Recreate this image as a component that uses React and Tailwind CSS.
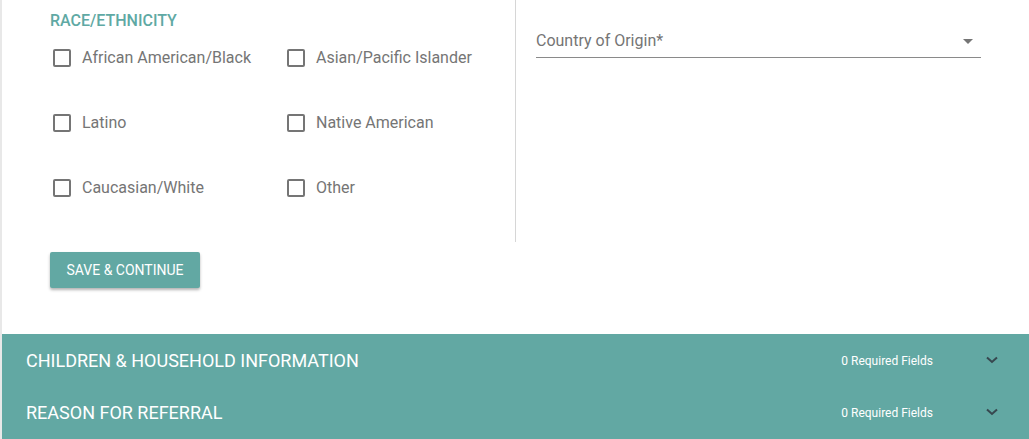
import React from "react";

const font = { fontFamily: "Roboto, 'Noto Sans', sans-serif" };

function Checkbox({ label }) {
  return (
    <label className="flex items-center h-[18px]">
      <span className="w-[18px] h-[18px] border-2 border-[#757575] rounded-[2px] box-border shrink-0" />
      <span className="ml-[11px] text-[16px] text-[#757575] leading-5 whitespace-nowrap">{label}</span>
    </label>
  );
}

function Chevron() {
  return (
    <svg width="12" height="8" viewBox="0 0 12 8" className="shrink-0">
      <path d="M1 1.5 L6 6 L11 1.5" fill="none" stroke="#37474f" strokeWidth="2" />
    </svg>
  );
}

function Section({ title }) {
  return (
    <div className="h-[52px] flex items-center pl-6 pr-[31px]">
      <div className="text-[18px] leading-6 font-normal text-white flex-1 mt-[2px]">{title}</div>
      <div className="text-[12px] text-white mr-[53px] mt-[1px]">0 Required Fields</div>
      <Chevron />
    </div>
  );
}

export default function App() {
  const items = [
    ["African American/Black", "Asian/Pacific Islander"],
    ["Latino", "Native American"],
    ["Caucasian/White", "Other"],
  ];
  return (
    <div className="w-[1029px] h-[439px] bg-[#e8e8e8] pl-[2px] overflow-hidden" style={font}>
      <div className="bg-white h-full flex flex-col">
        <div className="flex h-[334px] flex-col">
          <div className="flex">
            <div className="w-[514px] h-[242px] border-r border-[#d6d6d6] pl-12 pt-[11px]">
              <div className="text-[16px] leading-5 font-medium text-[#5fa9a4]">RACE/ETHNICITY</div>
              <div className="mt-[18px] flex flex-col gap-[47px] pl-[3px]">
                {items.map((row, i) => (
                  <div key={i} className="flex">
                    <div className="w-[234px]"><Checkbox label={row[0]} /></div>
                    <Checkbox label={row[1]} />
                  </div>
                ))}
              </div>
            </div>
            <div className="pl-5 pt-[31px]">
              <div className="w-[445px] h-[27px] border-b border-[#8a8a8a] flex items-start justify-between">
                <span className="text-[16px] leading-5 text-[#757575]">Country of Origin*</span>
                <svg width="10" height="5" viewBox="0 0 10 5" className="mt-[8px] mr-[8px]">
                  <path d="M0 0 L10 0 L5 5 Z" fill="#757575" />
                </svg>
              </div>
            </div>
          </div>
          <div className="pl-12 pt-[10px]">
            <button className="w-[150px] h-9 bg-[#62a8a3] text-white text-[14px] font-normal rounded-[2px] shadow-[0_2px_3px_rgba(0,0,0,0.3)]">
              SAVE &amp; CONTINUE
            </button>
          </div>
        </div>
        <div className="bg-[#62a8a3] flex-1">
          <Section title="CHILDREN & HOUSEHOLD INFORMATION" />
          <Section title="REASON FOR REFERRAL" />
        </div>
      </div>
    </div>
  );
}
